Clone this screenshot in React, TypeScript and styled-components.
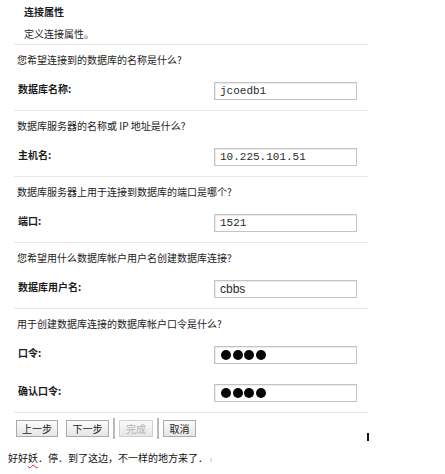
import React from 'react';
import styled, { createGlobalStyle } from 'styled-components';

const GlobalStyle = createGlobalStyle`
  html, body {
    margin: 0;
    padding: 0;
    background: #ffffff;
  }
  body {
    font-family: "Noto Sans CJK SC", "Liberation Sans", sans-serif;
    font-size: 10px;
    color: #1c1c1c;
  }
`;

const Page = styled.div`
  position: relative;
  width: 445px;
  height: 474px;
  padding-left: 8px;
  box-sizing: border-box;
  overflow: hidden;
`;

const Header = styled.div`
  padding: 6px 0 4px 16px;
`;

const Title = styled.div`
  font-weight: bold;
  line-height: 12px;
  height: 12px;
`;

const Description = styled.div`
  margin-top: 10px;
  line-height: 12px;
`;

const Wizard = styled.div`
  margin-left: 6px;
  width: 354px;
`;

const Section = styled.div`
  border-top: 1px solid #e6e6e6;
  padding: 9px 0 10px 0;
`;

const Question = styled.div`
  padding-left: 3px;
  line-height: 12px;
  height: 12px;
`;

const Rows = styled.div`
  margin-top: 16px;
  display: flex;
  flex-direction: column;
  gap: 20px;
`;

const Row = styled.div`
  display: flex;
  align-items: flex-start;
  padding-left: 4px;
`;

const Label = styled.div`
  width: 196px;
  font-weight: bold;
  line-height: 12px;
  padding-top: 1px;
`;

const Field = styled.div<{ $mono?: boolean }>`
  width: 143px;
  height: 18px;
  box-sizing: border-box;
  border: 1px solid #c4c4c4;
  box-shadow: inset 1px 1px 0 #ececec;
  background: #fff;
  display: flex;
  align-items: center;
  padding-left: 5px;
  font-family: ${({ $mono }) =>
    $mono ? '"Liberation Mono", "DejaVu Sans Mono", monospace' : '"Liberation Sans", Arial, sans-serif'};
  font-size: ${({ $mono }) => ($mono ? '11px' : '12px')};
  color: #2a2a2a;
`;

const Dots = styled.div`
  display: flex;
  gap: 1.7px;
  padding-left: 1px;
`;

const Dot = styled.span`
  width: 10px;
  height: 10px;
  border-radius: 50%;
  background: #050505;
`;

const ButtonBar = styled.div`
  border-top: 1px solid #e6e6e6;
  padding: 5px 0 0 2px;
  display: flex;
  align-items: center;
  gap: 8px;
`;

const Button = styled.div<{ $disabled?: boolean; $w: number }>`
  width: ${({ $w }) => $w}px;
  height: 17px;
  box-sizing: border-box;
  display: flex;
  align-items: center;
  justify-content: center;
  border: 1px solid ${({ $disabled }) => ($disabled ? '#cfcfcf' : '#a9a9a9')};
  background: linear-gradient(#fbfbfb, #e6e6e6);
  color: ${({ $disabled }) => ($disabled ? '#b0b0b0' : '#1c1c1c')};
  line-height: 12px;
`;

const Divider = styled.span`
  width: 2px;
  height: 21px;
  background: #b9b9b9;
  margin: 0 -4px;
`;

const Cursor = styled.span`
  position: absolute;
  left: 367px;
  top: 433px;
  width: 2px;
  height: 8px;
  background: #111;
`;

const Footer = styled.div`
  margin-top: 13px;
  line-height: 12px;
  color: #111;
`;

const Misspelt = styled.span`
  text-decoration: underline wavy #d22;
  text-decoration-thickness: 1px;
  text-underline-offset: 2px;
`;

const Mark = styled.span`
  color: #aaa;
  font-size: 7px;
  margin-left: 2px;
`;

interface FieldDef {
  label: string;
  value?: string;
  mono?: boolean;
  secret?: boolean;
}

interface SectionDef {
  question: string;
  fields: FieldDef[];
}

const sections: SectionDef[] = [
  {
    question: '您希望连接到的数据库的名称是什么?',
    fields: [{ label: '数据库名称:', value: 'jcoedb1', mono: true }],
  },
  {
    question: '数据库服务器的名称或 IP 地址是什么?',
    fields: [{ label: '主机名:', value: '10.225.101.51', mono: true }],
  },
  {
    question: '数据库服务器上用于连接到数据库的端口是哪个?',
    fields: [{ label: '端口:', value: '1521', mono: true }],
  },
  {
    question: '您希望用什么数据库帐户用户名创建数据库连接?',
    fields: [{ label: '数据库用户名:', value: 'cbbs' }],
  },
  {
    question: '用于创建数据库连接的数据库帐户口令是什么?',
    fields: [
      { label: '口令:', secret: true },
      { label: '确认口令:', secret: true },
    ],
  },
];

const App: React.FC = () => {
  return (
    <Page>
      <GlobalStyle />
      <Header>
        <Title>连接属性</Title>
        <Description>定义连接属性。</Description>
      </Header>

      <Wizard>
        {sections.map((s) => (
          <Section key={s.question}>
            <Question>{s.question}</Question>
            <Rows>
              {s.fields.map((f) => (
                <Row key={f.label}>
                  <Label>{f.label}</Label>
                  <Field $mono={f.mono}>
                    {f.secret ? (
                      <Dots>
                        <Dot />
                        <Dot />
                        <Dot />
                        <Dot />
                      </Dots>
                    ) : (
                      f.value
                    )}
                  </Field>
                </Row>
              ))}
            </Rows>
          </Section>
        ))}

        <ButtonBar>
          <Button $w={42}>上一步</Button>
          <Button $w={43}>下一步</Button>
          <Divider />
          <Button $w={34} $disabled>
            完成
          </Button>
          <Divider />
          <Button $w={33}>取消</Button>
        </ButtonBar>
      </Wizard>

      <Footer>
        好好<Misspelt>妖</Misspelt>．停．到了这边，不一样的地方来了．<Mark>ı</Mark>
      </Footer>
      <Cursor />
    </Page>
  );
};

export default App;
